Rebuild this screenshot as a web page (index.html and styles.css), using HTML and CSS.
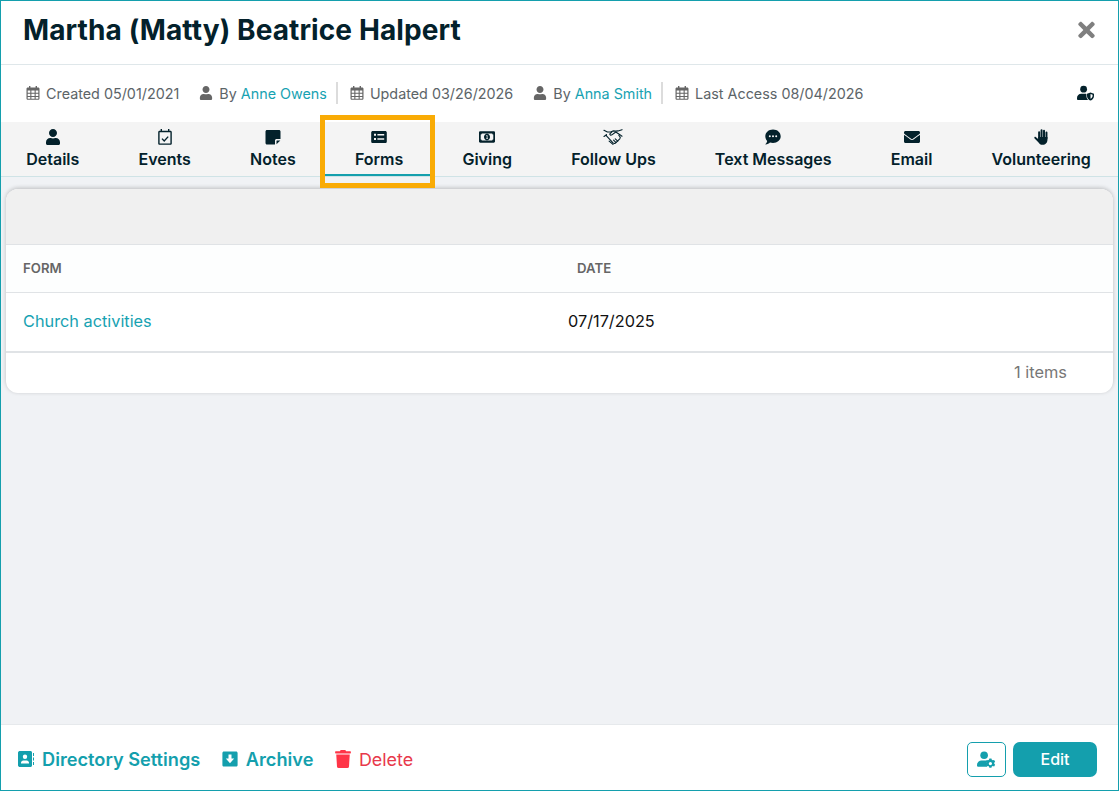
FILE: index.html
```html
<!DOCTYPE html>
<html lang="en">
<head>
  <meta charset="UTF-8" />
  <meta name="viewport" content="width=device-width, initial-scale=1.0" />
  <title>Martha (Matty) Beatrice Halpert</title>
  <link rel="stylesheet" href="styles.css">
</head>
<body>
  <svg class="defs" width="0" height="0" aria-hidden="true">
    <symbol id="i-user" viewBox="0 0 448 512">
      <path d="M224 256c70.7 0 128-57.3 128-128S294.7 0 224 0 96 57.3 96 128s57.3 128 128 128zm89.6 32h-16.7c-22.2 10.2-46.9 16-72.9 16s-50.6-5.8-72.9-16h-16.7C60.2 288 0 348.2 0 422.4V464c0 26.5 21.5 48 48 48h352c26.5 0 48-21.5 48-48v-41.6c0-74.2-60.2-134.4-134.4-134.4z"/>
    </symbol>
    <symbol id="i-cal" viewBox="0 0 14 14">
      <path fill-rule="evenodd" d="M3 0h1.4v1.4h5.2V0H11v1.4h1.2c.7 0 1.3.6 1.3 1.3v9.8c0 .7-.6 1.3-1.3 1.3H1.8c-.7 0-1.3-.6-1.3-1.3V2.7c0-.7.6-1.3 1.3-1.3H3zM1.7 4.6v2.2h2.6V4.6zm3.7 0v2.2h3.2V4.6zm4.3 0v2.2h2.6V4.6zM1.7 7.8V10h2.6V7.8zm3.7 0V10h3.2V7.8zm4.3 0V10h2.6V7.8zM1.7 11v1.8h2.6V11zm3.7 0v1.8h3.2V11zm4.3 0v1.8h2.6V11z"/>
    </symbol>
    <symbol id="i-event" viewBox="0 0 16 16">
      <path fill-rule="evenodd" d="M3.6 0H5v1.8h6V0h1.4v1.8h1c.8 0 1.4.6 1.4 1.4v11.2c0 .8-.6 1.4-1.4 1.4H2.6c-.8 0-1.4-.6-1.4-1.4V3.200c0-.8.6-1.400 1.400-1.400h1zM2.600 3.200v11.200h10.800V3.200z"/>
      <path d="M5 9.600l2.200 2.400 4-4.400" fill="none" stroke="currentColor" stroke-width="1.400"/>
    </symbol>
    <symbol id="i-note" viewBox="0 0 16 16">
      <path d="M2 1h12c.8 0 1.500.7 1.500 1.500V10h-4c-.8 0-1.500.7-1.500 1.500V15.500H2c-.8 0-1.500-.7-1.500-1.500V2.500C.5 1.700 1.200 1 2 1z"/>
      <path d="M15.300 11.500L11.500 15.300v-3.300c0-.3.200-.5.500-.5z"/>
    </symbol>
    <symbol id="i-form" viewBox="0 0 16 16">
      <path fill-rule="evenodd" d="M1.800 2h12.400c.9 0 1.600.7 1.600 1.600v8.800c0 .9-.7 1.600-1.600 1.600H1.800C.9 14 .2 13.300.2 12.400V3.600C.2 2.700.9 2 1.800 2zM3 4.800v2h2v-2zm3.400.3v1.400h6.800V5.100zM3 9v2h2V9zm3.400.3v1.400h6.800V9.300z"/>
    </symbol>
    <symbol id="i-money" viewBox="0 0 16 16">
      <path fill-rule="evenodd" d="M1.200 2.300h13.600c.6 0 1.200.5 1.200 1.200v9c0 .7-.6 1.200-1.200 1.200H1.200C.6 13.700 0 13.200 0 12.500v-9c0-.7.600-1.200 1.200-1.200zm1.600 2.200c0 .5-.5 1-1.100 1v5c.6 0 1.100.5 1.100 1h10.400c0-.5.500-1 1.100-1v-5c-.6 0-1.100-.5-1.100-1zM8 4.800c1.700 0 3 1.400 3 3.200s-1.300 3.200-3 3.200S5 9.800 5 8s1.300-3.200 3-3.200zM7.200 6.300v.8h.5v2.300h-.6v.7h1.900v-.7h-.5V6.300z"/>
    </symbol>
    <symbol id="i-shake" viewBox="0.5 1 17 14.200">
      <g fill="none" stroke="currentColor" stroke-width="1" stroke-linejoin="round" stroke-linecap="round">
        <path d="M1 2.200l3 1.500h3l2-1 2.500.2 2-.2L17 1.600"/>
        <path d="M1 7.600l2.200-1.500M17 7.400l-2.200-1.600L11.500 3.600 8 6.200c-1 .6-2 0-1.800-.8L8 3.600"/>
        <path d="M3.200 6.100l-.2.800 6 6.400c.8.800 1.600.6 2.200.2l3.800-3.800c.6-.7.500-1.600 0-2.200l-.8-.9"/>
        <path d="M5.600 11.800L9 14.700M11 9.800l2.200 2M9.500 10.800l2 2"/>
      </g>
    </symbol>
    <symbol id="i-chat" viewBox="0 0 16 16">
      <path fill-rule="evenodd" d="M8 .5c4.300 0 7.700 2.900 7.700 6.800S12.300 14 8 14c-1.100 0-2.100-.2-3-.5C4 14.300 2.500 15.500.6 15.500c-.2 0-.3-.3-.1-.4.8-.9 1.500-2.100 1.700-3.200C1 10.700.3 9.100.3 7.300.3 3.400 3.700.5 8 .5zM4.800 6.300a1 1 0 1 0 0 2 1 1 0 0 0 0-2zm3.200 0a1 1 0 1 0 0 2 1 1 0 0 0 0-2zm3.200 0a1 1 0 1 0 0 2 1 1 0 0 0 0-2z"/>
    </symbol>
    <symbol id="i-mail" viewBox="0 0 512 512">
      <path d="M502.300 190.800c3.900-3.100 9.700-.2 9.700 4.700V400c0 26.500-21.500 48-48 48H48c-26.500 0-48-21.500-48-48V195.600c0-5 5.700-7.800 9.700-4.700 22.400 17.400 52.100 39.500 154.100 113.600 21.100 15.400 56.700 47.800 92.200 47.600 35.700.3 72-32.800 92.300-47.600 102-74.100 131.600-96.300 154-113.700zM256 320c23.200.4 56.600-29.200 73.400-41.400 132.700-96.300 142.800-104.700 173.400-128.700 5.800-4.500 9.200-11.500 9.200-18.900v-19c0-26.500-21.500-48-48-48H48C21.500 64 0 85.500 0 112v19c0 7.400 3.400 14.300 9.200 18.900 30.600 23.900 40.700 32.400 173.400 128.700 16.800 12.200 50.200 41.800 73.400 41.400z"/>
    </symbol>
    <symbol id="i-hand" viewBox="0 0 16 17">
      <g stroke="currentColor" stroke-width="2.100" stroke-linecap="round">
        <path d="M6 3.400V9.500M8.600 1.200V9.500M11.200 1.800V9.500M13.800 3.800V10"/>
      </g>
      <path d="M4.950 8.500h9.900V11.500c0 3.200-2.100 5.300-5 5.300-2.400 0-3.600-1-4.700-2.800L1 9.700c-.3-.5-.2-1 .2-1.300s.9-.1 1.200.2l2.550 2z"/>
    </symbol>
    <symbol id="i-shield" viewBox="0 0 18 16">
      <circle cx="7" cy="4" r="3.600"/>
      <path d="M4.500 8.800h4.200c.5 0 .9.100 1.300.3v2c0 1.300.5 3 1.800 4.400H1.300C.6 15.500 0 15 0 14.300v-1C0 10.800 2 8.800 4.500 8.800z"/>
      <path fill-rule="evenodd" d="M14.300 7.500l3.700 1.400v2.200c0 2.200-1.500 4.100-3.700 4.900-2.200-.8-3.700-2.700-3.700-4.900V8.900zm0 1.600v5c1.300-.6 2.200-1.800 2.200-3.100V9.900z"/>
    </symbol>
    <symbol id="i-cog" viewBox="0 0 20 17">
      <circle cx="7.500" cy="4" r="4"/>
      <path d="M4.700 9.500h4.800c.2 0 .4 0 .6.100-.2 1.100 0 2.300.6 3.200-.6 1-.7 2.300-.1 3.400H1.500C.7 16.200 0 15.500 0 14.700v-.4c0-2.700 2.100-4.800 4.700-4.800z"/>
      <path fill-rule="evenodd" d="M15.200 7.400l.4 1.400c.4.100.7.300 1 .5l1.400-.4 1.100 1.900-1 1c.1.400.1.800 0 1.100l1 1-1.100 1.900-1.400-.4c-.3.200-.6.400-1 .5l-.4 1.400h-2.200l-.4-1.400c-.4-.1-.7-.3-1-.5l-1.400.4-1.100-1.900 1-1c-.1-.4-.1-.8 0-1.100l-1-1 1.100-1.900 1.400.4c.3-.2.6-.4 1-.5l.4-1.400zm-1.100 3.700a1.700 1.700 0 1 0 0 3.400 1.700 1.700 0 0 0 0-3.400z"/>
    </symbol>
  </svg>

  <div class="modal">
    <header class="title-bar">
      <h1>Martha (Matty) Beatrice Halpert</h1>
      <button class="close-btn" aria-label="Close">
        <svg viewBox="0 0 352 512"><path d="M242.720 256l100.070-100.070c12.280-12.280 12.280-32.190 0-44.480l-22.240-22.240c-12.280-12.280-32.190-12.280-44.480 0L176 189.280 75.930 89.210c-12.280-12.280-32.190-12.280-44.480 0L9.210 111.450c-12.280 12.280-12.280 32.190 0 44.480L109.280 256 9.210 356.070c-12.280 12.280-12.280 32.190 0 44.480l22.240 22.240c12.280 12.280 32.200 12.280 44.480 0L176 322.720l100.070 100.070c12.280 12.280 32.200 12.280 44.480 0l22.240-22.240c12.280-12.280 12.280-32.190 0-44.480L242.720 256z"/></svg>
      </button>
    </header>

    <div class="meta-bar">
      <div class="meta-item"><svg class="meta-icon"><use href="#i-cal"/></svg>Created 05/01/2021</div>
      <div class="meta-item by"><svg class="meta-icon"><use href="#i-user"/></svg>By&nbsp;<a href="#">Anne Owens</a></div>
      <div class="meta-item after-rule"><svg class="meta-icon"><use href="#i-cal"/></svg>Updated 03/26/2026</div>
      <div class="meta-item by"><svg class="meta-icon"><use href="#i-user"/></svg>By&nbsp;<a href="#">Anna Smith</a></div>
      <div class="meta-item after-rule"><svg class="meta-icon"><use href="#i-cal"/></svg>Last Access 08/04/2026</div>
      <svg class="privacy-icon"><use href="#i-shield"/></svg>
    </div>

    <nav class="tabs">
      <a class="tab" href="#"><svg><use href="#i-user"/></svg>Details</a>
      <a class="tab" href="#"><svg><use href="#i-event"/></svg>Events</a>
      <a class="tab" href="#"><svg><use href="#i-note"/></svg>Notes</a>
      <a class="tab active" href="#"><svg><use href="#i-form"/></svg>Forms</a>
      <a class="tab" href="#"><svg><use href="#i-money"/></svg>Giving</a>
      <a class="tab" href="#"><svg class="wide"><use href="#i-shake"/></svg>Follow Ups</a>
      <a class="tab" href="#"><svg><use href="#i-chat"/></svg>Text Messages</a>
      <a class="tab" href="#"><svg><use href="#i-mail"/></svg>Email</a>
      <a class="tab" href="#"><svg><use href="#i-hand"/></svg>Volunteering</a>
    </nav>

    <main class="content">
      <section class="grid-card">
        <div class="grid-toolbar"></div>
        <div class="grid-row grid-head">
          <div>FORM</div>
          <div class="date-head">DATE</div>
        </div>
        <div class="grid-row grid-body">
          <a href="#">Church activities</a>
          <div class="date-cell">07/17/2025</div>
        </div>
        <div class="grid-foot">1 items</div>
      </section>
    </main>

    <footer class="actions">
      <a class="action" href="#">
        <svg viewBox="0 0 16 18"><path fill-rule="evenodd" d="M2 1h10.500c.8 0 1.500.7 1.500 1.500v13c0 .8-.7 1.500-1.500 1.500H2c-1 0-2-.7-2-1.500v-13C0 1.700 1 1 2 1zm5 3.500a2.200 2.200 0 1 0 0 4.400 2.200 2.200 0 0 0 0-4.400zM3 13.500h8v-.8c0-1.300-1-2.300-2.300-2.300H5.300C4 10.400 3 11.400 3 12.700zM15 3h1v3h-1zm0 4.500h1v3h-1zm0 4.500h1v3h-1z"/></svg>
        Directory Settings
      </a>
      <a class="action" href="#">
        <svg viewBox="0 0 16 16"><path fill-rule="evenodd" d="M2 .5h12c.9 0 1.600.7 1.600 1.600v11.800c0 .9-.7 1.600-1.600 1.600H2c-.9 0-1.600-.7-1.600-1.600V2.100C.4 1.200 1.100.5 2 .5zm4.500 3v4.100H3.800L8 12.300l4.200-4.700H9.500V3.500z"/></svg>
        Archive
      </a>
      <a class="action danger" href="#">
        <svg viewBox="0 0 448 512"><path d="M432 32H312l-9.400-18.700A24 24 0 0 0 281.100 0H166.800a23.720 23.720 0 0 0-21.400 13.300L136 32H16A16 16 0 0 0 0 48v32a16 16 0 0 0 16 16h416a16 16 0 0 0 16-16V48a16 16 0 0 0-16-16zM53.200 467a48 48 0 0 0 47.900 45h245.800a48 48 0 0 0 47.900-45L416 128H32z"/></svg>
        Delete
      </a>
      <button class="btn-outline" aria-label="User settings"><svg><use href="#i-cog"/></svg></button>
      <button class="btn-primary">Edit</button>
    </footer>

    <div class="highlight-box"></div>
  </div>
</body>
</html>
```

FILE: styles.css
```css
:root {
  --teal: #149fad;
  --link: #17a2b2;
  --ink: #03212b;
  --meta: #5c6468;
  --line: #e0e3e6;
}

* {
  box-sizing: border-box;
}

html, body {
  height: 100%;
}

body {
  margin: 0;
  font-family: Inter, "Liberation Sans", sans-serif;
  color: var(--ink);
  background: #fff;
}

a {
  text-decoration: none;
  color: var(--link);
}

.defs {
  position: absolute;
}

svg {
  fill: currentColor;
}

.modal {
  position: relative;
  display: flex;
  flex-direction: column;
  height: 100vh;
  border: 1px solid var(--teal);
  background: #fff;
  overflow: hidden;
}

/* title */
.title-bar {
  display: flex;
  align-items: center;
  justify-content: space-between;
  height: 64px;
  flex: none;
  padding: 0 23px 5px 22px;
  border-bottom: 1px solid #dfe7ea;
}

.title-bar h1 {
  margin: 0;
  font-size: 28px;
  font-weight: 700;
  letter-spacing: 0.1px;
}

.close-btn {
  display: flex;
  padding: 0;
  border: none;
  background: none;
  color: #7f7f7f;
}

.close-btn svg {
  width: 17px;
  height: 24px;
}

/* created / updated row */
.meta-bar {
  display: flex;
  align-items: center;
  flex: none;
  height: 56px;
  padding: 0 24px 0 25px;
  margin-bottom: 1px;
  font-size: 14.35px;
  color: var(--meta);
}

.meta-item {
  display: flex;
  align-items: center;
  white-space: nowrap;
}

.meta-icon {
  width: 14px;
  height: 14px;
  margin-right: 6px;
  color: #666;
}

.meta-item.by {
  margin-left: 20px;
}

.meta-item.after-rule {
  margin-left: 9px;
  padding-left: 12px;
  height: 22px;
  border-left: 2px solid #dcdcdc;
}

.privacy-icon {
  width: 17px;
  height: 16px;
  margin-left: auto;
  color: var(--ink);
}

/* tabs */
.tabs {
  display: flex;
  justify-content: center;
  flex: none;
  height: 55px;
  padding-right: 2px;
  background: #f4f4f4;
  border-bottom: 1px solid #cfe3e6;
}

.tab {
  display: flex;
  flex-direction: column;
  align-items: center;
  flex: none;
  height: 54px;
  padding: 7px 29.6px 0;
  font-size: 16px;
  font-weight: 600;
  line-height: 22px;
  color: var(--ink);
  white-space: nowrap;
}

.tab svg {
  width: 16px;
  height: 16px;
  margin-bottom: 3px;
}

.tab svg.wide {
  width: 20px;
}

.tab.active {
  border-bottom: 2px solid var(--teal);
}

.content {
  flex: 1;
  padding: 12px 5px 0;
  background: #f0f2f5;
}

/* grid card */
.grid-card {
  background: #fff;
  border-radius: 12px;
  box-shadow: 0 -1px 4px rgba(0, 0, 0, 0.22);
  overflow: hidden;
}

.grid-toolbar {
  height: 56px;
  background: #f0f0f0;
  border-bottom: 1px solid var(--line);
}

.grid-row {
  display: grid;
  grid-template-columns: 545px 1fr;
  align-items: center;
  padding: 0 0 2px 17px;
  border-bottom: 1px solid var(--line);
}

.grid-head {
  height: 48px;
  font-size: 13.2px;
  font-weight: 600;
  color: #666;
  background: #fdfefe;
}

.date-head {
  padding-left: 9px;
}

.grid-body {
  height: 60px;
  font-size: 16.3px;
  border-bottom: 2px solid var(--line);
}

.date-cell {
  color: #111;
}

.grid-foot {
  height: 40px;
  padding: 9px 46px 0 0;
  text-align: right;
  font-size: 16.4px;
  color: #777;
}

/* bottom actions */
.actions {
  display: flex;
  align-items: center;
  flex: none;
  height: 66px;
  padding: 3px 21px 0 17px;
  border-top: 1px solid #e6e9ec;
  background: #fff;
}

.action {
  display: flex;
  align-items: center;
  gap: 8px;
  margin-right: 21.5px;
  font-size: 18.2px;
  font-weight: 600;
  color: var(--teal);
}

.action svg {
  width: 16px;
  height: 18px;
}

.action.danger {
  font-size: 17.9px;
  font-weight: 400;
  color: #e8394b;
}

.action.danger svg {
  color: #ff3547;
}

.btn-outline {
  display: flex;
  align-items: center;
  justify-content: center;
  width: 39px;
  height: 35px;
  margin-left: auto;
  margin-right: 7px;
  padding: 0;
  border: 1px solid var(--teal);
  border-radius: 5px;
  background: #fff;
  color: var(--teal);
}

.btn-outline svg {
  width: 19px;
  height: 17px;
}

.btn-primary {
  width: 84px;
  height: 35px;
  border: none;
  border-radius: 7px;
  background: var(--teal);
  color: #fff;
  font-family: inherit;
  font-size: 16px;
  font-weight: 500;
}

/* annotation drawn over the active tab */
.highlight-box {
  position: absolute;
  left: 319px;
  top: 114px;
  width: 115px;
  height: 73px;
  border: 5px solid #f9ab05;
  pointer-events: none;
}
```
